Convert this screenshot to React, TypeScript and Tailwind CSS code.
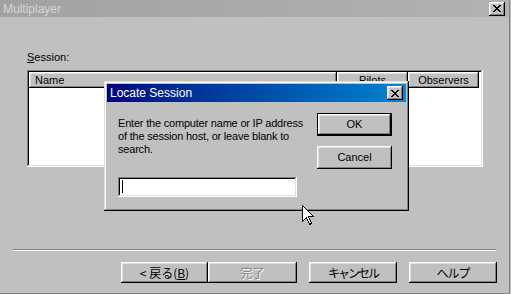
const raised =
  "shadow-[inset_-1px_-1px_#000,inset_1px_1px_#fff,inset_-2px_-2px_#808080,inset_2px_2px_#dfdfdf]";
const sunken =
  "shadow-[inset_-1px_-1px_#fff,inset_1px_1px_#808080,inset_-2px_-2px_#dfdfdf,inset_2px_2px_#000]";

const CloseX = () => (
  <svg width="8" height="7" viewBox="0 0 8 7" shapeRendering="crispEdges">
    <path
      d="M0 0h2v1H0zM6 0h2v1H6zM1 1h2v1H1zM5 1h2v1H5zM2 2h4v1H2zM3 3h2v1H3zM2 4h4v1H2zM1 5h2v1H1zM5 5h2v1H5zM0 6h2v1H0zM6 6h2v1H6z"
      fill="#000"
    />
  </svg>
);

const CloseButton = () => (
  <div className={`w-[16px] h-[14px] bg-[#c0c0c0] flex items-center justify-center ${raised}`}>
    <CloseX />
  </div>
);

const Cursor = () => (
  <svg width="13" height="21" viewBox="0 0 13 21" className="absolute left-[302px] top-[205px]">
    <path
      d="M0.5 0.5 L0.5 16.5 L4.5 12.5 L7.5 19.5 L9.5 18.5 L6.5 11.5 L11.5 11.5 Z"
      fill="#fff"
      stroke="#000"
      strokeWidth="1"
      shapeRendering="crispEdges"
    />
  </svg>
);

export default function App() {
  return (
    <div className="relative w-[511px] h-[294px] overflow-hidden bg-[#c0c0c0] font-['Liberation_Sans','Noto_Sans_CJK_JP',sans-serif] text-[11px] text-black">
      <div className="w-[510px] h-[294px] border-r border-b border-[#808080]">
        {/* TITLE */}
        <div className="h-[17px] bg-linear-to-r from-[#a2a2a2] to-[#b2b2b2] flex items-center justify-between pl-[3px] pr-[4px]">
          <span className="text-[12px] text-[#d6d6d6] leading-[14px]">Multiplayer</span>
          <CloseButton />
        </div>

        {/* SESSION LIST */}
        <div className="ml-[27px] mt-[34px] leading-[13px]">
          <span className="underline">S</span>ession:
        </div>
        <div className={`ml-[27px] mt-[6px] w-[456px] h-[97px] bg-white p-[2px] ${sunken}`}>
          <div className="flex h-[16px] bg-[#c0c0c0]">
            <div className={`w-[308px] pl-[6px] leading-[16px] ${raised}`}>Name</div>
            <div className={`w-[71px] text-center leading-[16px] ${raised}`}>Pilots</div>
            <div className={`w-[71px] text-center leading-[16px] ${raised}`}>Observers</div>
            <div className="flex-1 bg-white" />
          </div>
        </div>

        {/* SEPARATOR */}
        <div className="ml-[13px] mt-[82px] w-[483px] border-t border-b border-t-[#808080] border-b-white" />

        {/* BUTTONS */}
        <div className="flex mt-[11px] h-[21px] text-[12px] font-['Noto_Sans_CJK_JP',sans-serif]">
          <div className={`ml-[121px] w-[87px] flex items-center justify-center ${raised}`}>
            &lt; 戻る(<span className="underline">B</span>)
          </div>
          <div className={`w-[89px] flex items-center justify-center text-[#808080] [text-shadow:1px_1px_0_#fff] ${raised}`}>
            完了
          </div>
          <div className={`ml-[12px] w-[88px] flex items-center justify-center tracking-[-2px] ${raised}`}>
            キャンセル
          </div>
          <div className={`ml-[12px] w-[88px] flex items-center justify-center tracking-[-1px] ${raised}`}>
            ヘルプ
          </div>
        </div>
      </div>

      {/* LOCATE SESSION DIALOG */}
      <div className="absolute left-[104px] top-[81px] w-[305px] h-[130px] bg-[#c0c0c0] p-[3px] shadow-[inset_-1px_-1px_#000,inset_1px_1px_#dfdfdf,inset_-2px_-2px_#808080,inset_2px_2px_#fff]">
        <div className="h-[18px] bg-linear-to-r from-[#000080] to-[#1084d0] flex items-center justify-between pl-[3px] pr-[3px]">
          <span className="text-[12px] text-white leading-[14px]">Locate Session</span>
          <CloseButton />
        </div>
        <div className="flex pl-[11px] pt-[11px]">
          <div className="w-[199px]">
            <div className="mt-[4px] leading-[13px] tracking-[-0.2px]">
              Enter the computer name or IP address
              <br />
              of the session host, or leave blank to
              <br />
              search.
            </div>
            <div className={`mt-[21px] w-[179px] h-[20px] bg-white p-[3px] ${sunken}`}>
              <div className="ml-[1px] w-[1px] h-[13px] bg-black" />
            </div>
          </div>
          <div className="flex flex-col">
            <div className="w-[75px] h-[23px] border border-black bg-[#c0c0c0]">
              <div className={`w-full h-full flex items-center justify-center ${raised}`}>OK</div>
            </div>
            <div className={`mt-[10px] w-[75px] h-[23px] flex items-center justify-center ${raised}`}>
              Cancel
            </div>
          </div>
        </div>
      </div>

      <Cursor />
    </div>
  );
}
